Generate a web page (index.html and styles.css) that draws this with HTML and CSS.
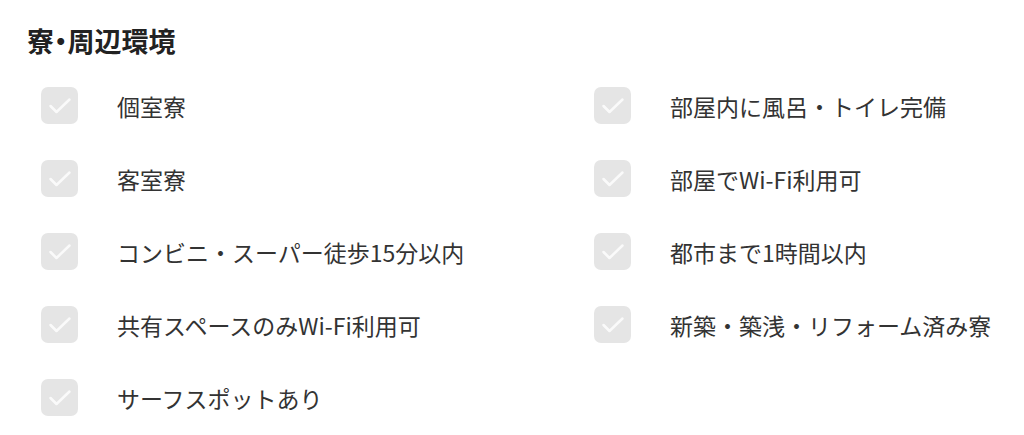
FILE: index.html
```html
<!DOCTYPE html>
<html lang="ja">
<head>
  <meta charset="UTF-8">
  <meta name="viewport" content="width=device-width, initial-scale=1.0">
  <title>寮・周辺環境</title>
  <link rel="stylesheet" href="styles.css">
</head>
<body>

  <section class="facility">
    <h2>寮・周辺環境</h2>

    <ul class="facility-list">
      <li><span class="check"><svg viewBox="0 0 37 37"><path d="M9.5 19 L15.5 25 L28.5 12.5"/></svg></span>個室寮</li>
      <li><span class="check"><svg viewBox="0 0 37 37"><path d="M9.5 19 L15.5 25 L28.5 12.5"/></svg></span>部屋内に風呂・トイレ完備</li>
      <li><span class="check"><svg viewBox="0 0 37 37"><path d="M9.5 19 L15.5 25 L28.5 12.5"/></svg></span>客室寮</li>
      <li><span class="check"><svg viewBox="0 0 37 37"><path d="M9.5 19 L15.5 25 L28.5 12.5"/></svg></span>部屋でWi-Fi利用可</li>
      <li><span class="check"><svg viewBox="0 0 37 37"><path d="M9.5 19 L15.5 25 L28.5 12.5"/></svg></span>コンビニ・スーパー徒歩15分以内</li>
      <li><span class="check"><svg viewBox="0 0 37 37"><path d="M9.5 19 L15.5 25 L28.5 12.5"/></svg></span>都市まで1時間以内</li>
      <li><span class="check"><svg viewBox="0 0 37 37"><path d="M9.5 19 L15.5 25 L28.5 12.5"/></svg></span>共有スペースのみWi-Fi利用可</li>
      <li><span class="check"><svg viewBox="0 0 37 37"><path d="M9.5 19 L15.5 25 L28.5 12.5"/></svg></span>新築・築浅・リフォーム済み寮</li>
      <li><span class="check"><svg viewBox="0 0 37 37"><path d="M9.5 19 L15.5 25 L28.5 12.5"/></svg></span>サーフスポットあり</li>
    </ul>
  </section>

</body>
</html>
```

FILE: styles.css
```css
body {
  font-family: "Noto Sans CJK JP", "Noto Sans", sans-serif;
  background-color: #fff;
  color: #333;
  margin: 0;
  padding: 0;
}

.facility {
  padding: 23px 0 0 27px;
}

.facility h2 {
  font-size: 27px;
  font-weight: bold;
  font-feature-settings: "palt";
  color: #222;
  line-height: 36px;
  margin: 0 0 28px;
}

.facility-list {
  list-style: none;
  margin: 0;
  padding: 0 0 0 14px;
  display: grid;
  grid-template-columns: 553px 1fr;
  row-gap: 36px;
}

.facility-list li {
  display: flex;
  align-items: center;
  height: 37px;
  font-size: 23px;
  color: #333;
}

.check {
  width: 37px;
  height: 37px;
  border-radius: 7px;
  background-color: #e5e5e5;
  margin-right: 39px;
  flex-shrink: 0;
}

.check svg {
  display: block;
  width: 37px;
  height: 37px;
}

.check path {
  fill: none;
  stroke: #fafafa;
  stroke-width: 2.5;
  stroke-linecap: round;
  stroke-linejoin: round;
}
```
